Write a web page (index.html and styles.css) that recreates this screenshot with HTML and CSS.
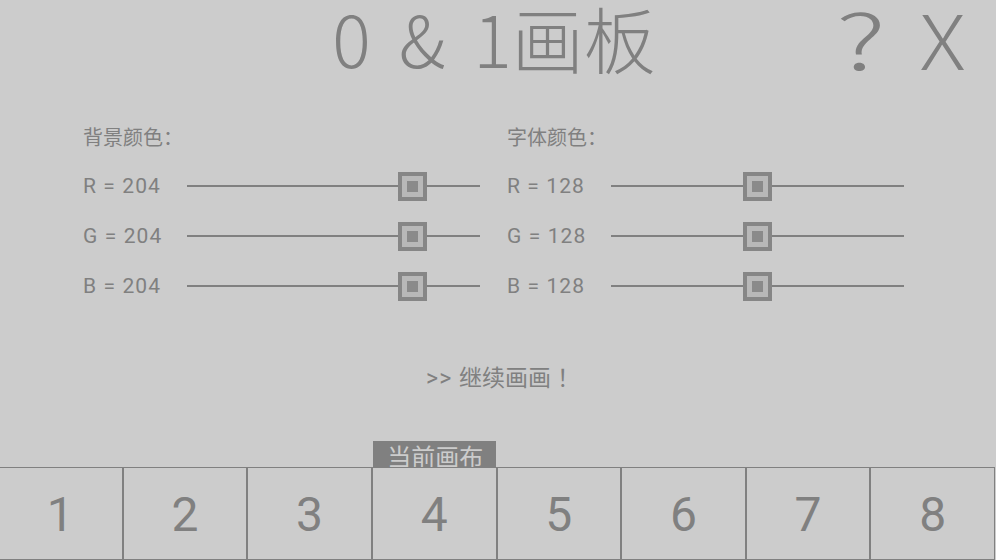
FILE: index.html
```html
<!DOCTYPE html>
<html lang="zh-CN">
<head>
<meta charset="utf-8">
<title>0 &amp; 1画板</title>
<link rel="stylesheet" href="styles.css">
</head>
<body>
<div class="app">
  <header class="header">
    <div class="side"></div>
    <h1 class="title">0 &amp; 1画板</h1>
    <div class="side actions">
      <span class="act q">?</span>
      <span class="act x">X</span>
    </div>
  </header>

  <section class="panel">
    <div class="group">
      <div class="group-title">背景颜色：</div>
      <div class="row"><span class="lbl">R = 204</span><div class="slider"><span class="seg" style="width:211px"></span><span class="thumb"><span class="core"></span></span><span class="seg rest"></span></div></div>
      <div class="row"><span class="lbl">G = 204</span><div class="slider"><span class="seg" style="width:211px"></span><span class="thumb"><span class="core"></span></span><span class="seg rest"></span></div></div>
      <div class="row"><span class="lbl">B = 204</span><div class="slider"><span class="seg" style="width:211px"></span><span class="thumb"><span class="core"></span></span><span class="seg rest"></span></div></div>
    </div>
    <div class="group">
      <div class="group-title">字体颜色：</div>
      <div class="row"><span class="lbl">R = 128</span><div class="slider"><span class="seg" style="width:132px"></span><span class="thumb"><span class="core"></span></span><span class="seg rest"></span></div></div>
      <div class="row"><span class="lbl">G = 128</span><div class="slider"><span class="seg" style="width:132px"></span><span class="thumb"><span class="core"></span></span><span class="seg rest"></span></div></div>
      <div class="row"><span class="lbl">B = 128</span><div class="slider"><span class="seg" style="width:132px"></span><span class="thumb"><span class="core"></span></span><span class="seg rest"></span></div></div>
    </div>
  </section>

  <div class="continue"><span class="arrows">&gt;&gt;</span> 继续画画<span class="bang">！</span></div>

  <footer class="canvases">
    <div class="tabrow">
      <span class="tab-slot"></span><span class="tab-slot"></span><span class="tab-slot"></span>
      <span class="tab-slot current"><span class="tag">当前画布</span></span>
      <span class="tab-slot"></span><span class="tab-slot"></span><span class="tab-slot"></span><span class="tab-slot"></span>
    </div>
    <div class="cells">
      <div class="cell">1</div>
      <div class="cell">2</div>
      <div class="cell">3</div>
      <div class="cell">4</div>
      <div class="cell">5</div>
      <div class="cell">6</div>
      <div class="cell">7</div>
      <div class="cell">8</div>
    </div>
  </footer>
</div>
</body>
</html>
```

FILE: styles.css
```css
* { box-sizing: border-box; }
html, body { margin: 0; padding: 0; }
body {
  background: #cccccc;
  color: #808080;
  font-family: Roboto, "Noto Sans CJK SC", sans-serif;
  width: 996px;
  height: 560px;
  overflow: hidden;
}
.app {
  width: 996px;
  height: 560px;
  display: flex;
  flex-direction: column;
}
.header {
  display: grid;
  grid-template-columns: 1fr auto 1fr;
  align-items: start;
  height: 96px;
  padding-top: 5px;
}
.title {
  margin: 0;
  font-family: "Noto Sans CJK SC", sans-serif;
  font-weight: 300;
  font-size: 72px;
  line-height: 63px;
  word-spacing: 12px;
  color: #808080;
  transform: translateX(-4px);
}
.actions {
  display: flex;
  justify-content: flex-end;
  gap: 38px;
  padding-right: 33px;
  padding-top: 1px;
  font-family: "Noto Sans CJK SC", sans-serif;
  font-weight: 300;
  font-size: 76px;
  line-height: 63px;
}
.act.q {
  display: inline-block;
  transform: scaleX(1.45);
  transform-origin: center;
  margin-right: 6px;
}
.act.x {
  display: inline-block;
  transform: scaleX(1.12);
}
.panel {
  display: flex;
  gap: 27px;
  padding-left: 83px;
  padding-top: 26px;
}
.group {
  width: 397px;
  display: flex;
  flex-direction: column;
}
.group-title {
  font-family: "Noto Sans CJK SC", sans-serif;
  font-size: 20px;
  line-height: 30px;
  height: 39px;
}
.row {
  display: flex;
  align-items: center;
  height: 50px;
}
.lbl {
  width: 104px;
  font-size: 21px;
  letter-spacing: 1.1px;
}
.slider {
  width: 293px;
  display: flex;
  align-items: center;
}
.seg {
  height: 2px;
  background: #808080;
  flex: none;
}
.seg.rest { flex: 1; }
.thumb {
  flex: none;
  width: 29px;
  height: 29px;
  border: 4px solid #868686;
  background: #b8b8b8;
  display: flex;
  align-items: center;
  justify-content: center;
}
.core {
  width: 11px;
  height: 11px;
  background: #8a8a8a;
}
.continue {
  margin-top: 53px;
  text-align: center;
  font-size: 23px;
  line-height: 30px;
  padding-left: 10px;
}
.arrows {
  letter-spacing: 1px;
  margin-right: 1px;
}
.bang {
  margin-left: 6px;
}
.canvases {
  margin-top: auto;
}
.tabrow {
  display: grid;
  grid-template-columns: repeat(8, 1fr);
  height: 26px;
  align-items: end;
  width: 997px;
  margin-left: -2px;
}
.tab-slot { height: 26px; }
.tag {
  display: block;
  height: 26px;
  margin-left: 1px;
  margin-right: 1px;
  background: #808080;
  color: #cccccc;
  font-family: "Noto Sans CJK SC", sans-serif;
  font-size: 24px;
  line-height: 30px;
  text-align: center;
  overflow: hidden;
  padding-left: 2px;
}
.cells {
  display: grid;
  grid-template-columns: repeat(8, 1fr);
  height: 93px;
  width: 997px;
  margin-left: -2px;
}
.cell {
  border: 1.5px solid #808080;
  display: flex;
  align-items: center;
  justify-content: center;
  font-size: 48px;
  padding-top: 2px;
}
```
